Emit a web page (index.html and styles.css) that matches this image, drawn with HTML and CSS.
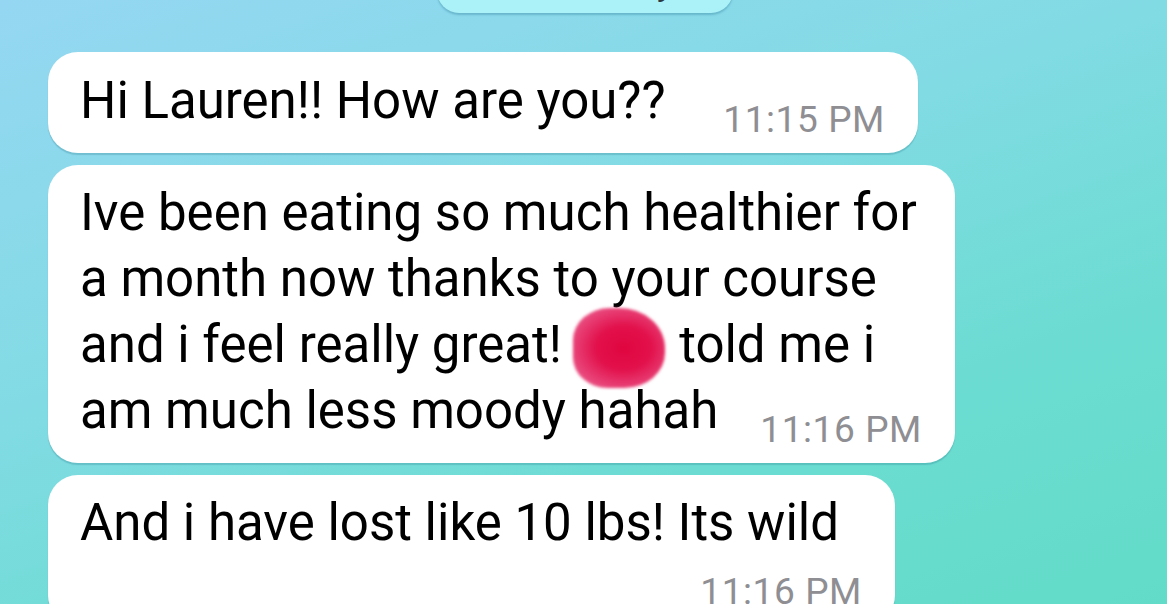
FILE: index.html
```html
<!DOCTYPE html>
<html>
<head>
  <title>Chat</title>
  <link rel="stylesheet" href="styles.css">
</head>
<body>
  <div class="date-pill">Yesterday</div>

  <div class="chat">
    <!-- incoming messages -->
    <div class="bubble msg-greet">
      Hi Lauren!! How are you??<span class="time">11:15 PM</span>
    </div>
    <div class="bubble msg-long">
      Ive been eating so much healthier for<br>
      a month now thanks to your course<br>
      and i feel really great! <span class="redact"></span> told me i<br>
      am much less moody hahah<span class="time">11:16 PM</span>
    </div>
    <div class="bubble msg-lost">
      And i have lost like 10 lbs! Its wild<span class="time time-below">11:16 PM</span>
    </div>
  </div>
</body>
</html>
```

FILE: styles.css
```css
html, body {
  height: 100%;
}

body {
  margin: 0;
  padding: 0;
  overflow: hidden;
  font-family: Roboto, "Liberation Sans", Arial, sans-serif;
  background: linear-gradient(160deg, #95d7f2 0%, #82dbe4 40%, #6cdcd2 70%, #62dcc8 100%);
  box-shadow: inset -2px 0 0 #ffffff;
  display: flex;
  flex-direction: column;
  align-items: center;
}

/* Date label at the top, mostly scrolled away */
.date-pill {
  width: 296px;
  height: 56px;
  margin-top: -43px;
  margin-bottom: 39px;
  flex-shrink: 0;
  box-sizing: border-box;
  padding-left: 34px;
  border-radius: 22px;
  background-color: #abf1f8;
  box-shadow: 0 2px 2px rgba(40, 120, 150, 0.35);
  color: #2b3a40;
  font-size: 32px;
  font-weight: 500;
  line-height: 56px;
  text-align: center;
}

.chat {
  align-self: stretch;
  padding-left: 48px;
  display: flex;
  flex-direction: column;
  align-items: flex-start;
  gap: 12px;
}

.bubble {
  display: flow-root;
  box-sizing: border-box;
  padding: 15px 33px 12px 32px;
  background-color: #fff;
  border-radius: 30px;
  box-shadow: 0 2px 1px rgba(30, 110, 130, 0.25);
  color: #000;
  font-size: 51px;
  line-height: 66px;
  white-space: nowrap;
}

.msg-greet {
  width: 870px;
  padding-top: 16px;
}

.msg-long {
  width: 907px;
}

.msg-lost {
  width: 847px;
}

.time {
  float: right;
  margin-top: 31px;
  margin-left: 30px;
  color: #8e8e93;
  font-size: 37px;
  letter-spacing: 0.6px;
  line-height: 42px;
}

/* time that no longer fits on the last line */
.time-below {
  float: none;
  display: block;
  margin-top: 15px;
  text-align: right;
}

/* scribbled out name */
.redact {
  display: inline-block;
  position: relative;
  width: 92px;
  height: 0;
}

.redact::after {
  content: '';
  position: absolute;
  left: -2px;
  top: -54px;
  width: 92px;
  height: 80px;
  border-radius: 40% 50% 44% 38%;
  background: radial-gradient(ellipse at 55% 50%, #e0063f 0%, #e2104b 38%, #e8457a 72%, #f07aa0 100%);
  filter: blur(1.5px);
}
```
